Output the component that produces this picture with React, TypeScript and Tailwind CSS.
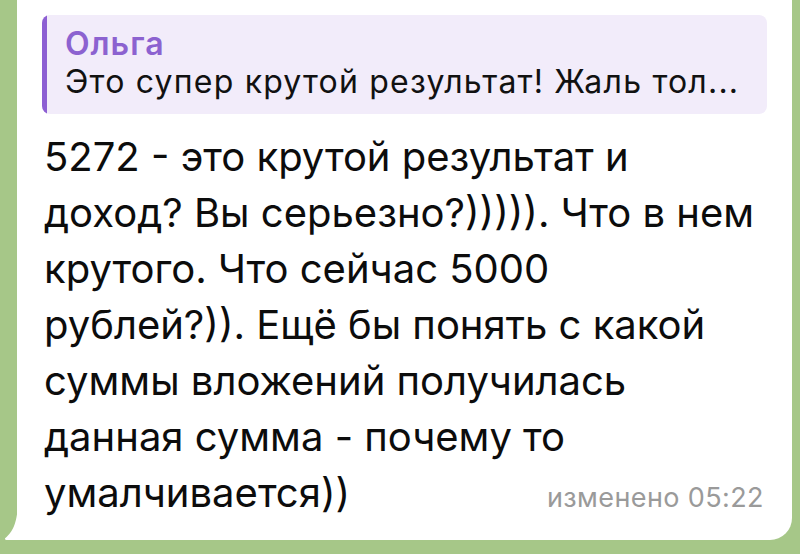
import React from "react";

const lines = [
  "5272 - это крутой результат и",
  "доход? Вы серьезно?))))). Что в нем",
  "крутого. Что сейчас 5000",
  "рублей?)). Ещё бы понять с какой",
  "суммы вложений получилась",
  "данная сумма - почему то",
];

export default function App() {
  return (
    <div
      className="w-[800px] h-[554px] overflow-hidden bg-[#a6c788] flex flex-col"
      style={{ fontFamily: "Inter, Roboto, 'Noto Sans', sans-serif" }}
    >
      <div className="relative ml-[17px] mr-[8px] h-[540px] bg-white rounded-br-[22px] px-[25px] pt-[15px] flex flex-col">
        {/* tail */}
        <svg
          className="absolute left-[-12px] bottom-0"
          width="14"
          height="36"
          viewBox="0 0 14 36"
        >
          <path d="M13 0 L14 0 L14 36 L2 36 C0 36 -1 35 1 33.5 C6 29 12 22 13 0 Z" fill="#ffffff" />
        </svg>
        <div className="flex h-[99px] rounded-[8px] overflow-hidden bg-[#f2ecfa]">
          <div className="w-[5px] bg-[#8d5fd3]" />
          <div className="flex flex-col pl-[18px] pt-[8px]">
            <div className="text-[32px] leading-[42px] font-semibold tracking-[1px] text-[#8c62d0]">Ольга</div>
            <div className="text-[32px] leading-[34px] tracking-[1.2px] text-[#111] whitespace-nowrap">
              Это супер крутой результат! Жаль тол...
            </div>
          </div>
        </div>
        <div className="mt-[15px] text-[40px] leading-[56px] text-[#0c0c0c] pl-[2px]">
          {lines.map((l, i) => (
            <div key={i} className="whitespace-nowrap">
              {l}
            </div>
          ))}
          <div className="flex items-baseline justify-between whitespace-nowrap">
            <span>умалчивается))</span>
            <span className="text-[27px] tracking-[0.4px] text-[#9a9a9a] mr-[3px]">изменено 05:22</span>
          </div>
        </div>
      </div>
    </div>
  );
}
